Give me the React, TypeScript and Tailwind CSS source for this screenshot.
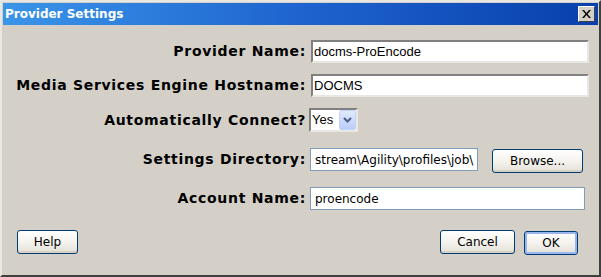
import React from 'react';

const labelFont = { fontFamily: '"DejaVu Sans", Tahoma, sans-serif' };

const XpButton: React.FC<{ label: string; width: string; focused?: boolean }> = ({ label, width, focused }) => (
  <button
    type="button"
    className={`${width} h-[24px] rounded-[3px] border border-[#003c74] bg-gradient-to-b from-white via-[#f4f3ee] to-[#e3e0d6] text-[12px] text-black ${
      focused ? 'shadow-[inset_0_0_0_2px_#9ab7ec]' : 'shadow-[inset_0_-2px_0_#d6d0c5]'
    }`}
    style={{ fontFamily: '"DejaVu Sans", Tahoma, sans-serif' }}
  >
    {label}
  </button>
);

const Label: React.FC<{ text: string }> = ({ text }) => (
  <div className="w-[304px] shrink-0 pr-[1px] text-right text-[14px] font-bold tracking-[0.7px] text-black" style={labelFont}>
    {text}
  </div>
);

export default function App() {
  return (
    <div className="w-[601px] h-[277px] bg-[#d4d0c8] overflow-hidden">
      <div className="flex h-full flex-col border-l-2 border-t-2 border-r-2 border-b-2 border-l-[#e9e7e1] border-t-[#e9e7e1] border-r-[#404040] border-b-[#404040] p-px">
        {/* title bar */}
        <div className="flex h-[22px] items-center justify-between bg-gradient-to-r from-[#3b95e8] via-[#1f63cf] to-[#0840ad] pl-[2px] pr-[3px]">
          <span className="text-[12px] font-bold text-white" style={labelFont}>
            Provider Settings
          </span>
          <div className="flex h-[16px] w-[17px] items-center justify-center border border-t-white border-l-white border-r-[#404040] border-b-[#404040] bg-[#d4d0c8]">
            <svg width="9" height="8" viewBox="0 0 9 8">
              <path d="M0 0h2l2.5 3 2.5-3h2L5.5 4 9 8H7L4.5 5 2 8H0l3.5-4z" fill="#000" />
            </svg>
          </div>
        </div>

        {/* form rows */}
        <div className="flex flex-1 flex-col">
          <div className="mt-[15px] flex h-[23px] items-center gap-[4px]">
            <Label text="Provider Name:" />
            <div className="flex h-[23px] w-[278px] items-center border-2 border-t-[#808080] border-l-[#808080] border-r-[#e9e7e1] border-b-[#e9e7e1] bg-white px-[1px] text-[13px]" style={{ fontFamily: '"Liberation Sans", Arial, sans-serif' }}>
              docms-ProEncode
            </div>
          </div>

          <div className="mt-[11px] flex h-[23px] items-center gap-[4px]">
            <Label text="Media Services Engine Hostname:" />
            <div className="flex h-[23px] w-[278px] items-center border-2 border-t-[#808080] border-l-[#808080] border-r-[#e9e7e1] border-b-[#e9e7e1] bg-white px-[1px] text-[13px]" style={{ fontFamily: '"Liberation Sans", Arial, sans-serif' }}>
              DOCMS
            </div>
          </div>

          <div className="mt-[11px] flex h-[24px] items-center gap-[2px]">
            <Label text="Automatically Connect?" />
            <div className="flex h-[24px] w-[49px] items-stretch border-2 border-t-[#808080] border-l-[#808080] border-r-[#e9e7e1] border-b-[#e9e7e1] bg-white">
              <span className="flex flex-1 items-center pl-[1px] text-[13px]" style={{ fontFamily: '"Liberation Sans", Arial, sans-serif' }}>
                Yes
              </span>
              <span className="flex w-[17px] items-center justify-center rounded-[2px] border border-[#c3d3fd] bg-gradient-to-b from-[#e1eafe] to-[#b9cdf8]">
                <svg width="9" height="6" viewBox="0 0 9 6">
                  <path d="M1 1l3.5 3.5L8 1" stroke="#4d6185" strokeWidth="2" fill="none" />
                </svg>
              </span>
            </div>
          </div>

          <div className="mt-[15px] flex h-[25px] items-center">
            <Label text="Settings Directory:" />
            <div className="ml-[3px] flex h-[23px] w-[168px] items-center overflow-hidden whitespace-nowrap border border-[#7f9db9] bg-white px-[4px] text-[12px]" style={labelFont}>
              stream\Agility\profiles\job\
            </div>
            <div className="ml-[14px]">
              <XpButton label="Browse..." width="w-[91px]" />
            </div>
          </div>

          <div className="mt-[15px] flex h-[23px] items-center gap-[3px]">
            <Label text="Account Name:" />
            <div className="flex h-[23px] w-[275px] items-center border border-[#7f9db9] bg-white px-[4px] text-[12px]" style={labelFont}>
              proencode
            </div>
          </div>

          <div className="mt-[19px] flex items-center pl-[14px] pr-[20px]">
            <XpButton label="Help" width="w-[61px]" />
            <div className="flex-1" />
            <XpButton label="Cancel" width="w-[75px]" />
            <div className="ml-[9px]">
              <XpButton label="OK" width="w-[54px]" focused />
            </div>
          </div>
        </div>
      </div>
    </div>
  );
}
